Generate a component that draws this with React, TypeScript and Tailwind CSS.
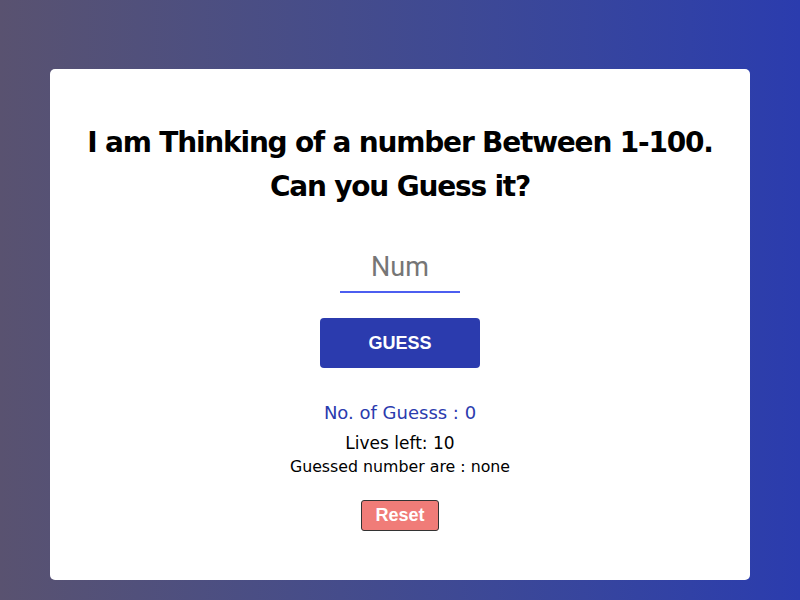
import { useState } from 'react';

export default function App() {
  const [value, setValue] = useState('');

  return (
    <div className="flex h-[600px] w-full items-start justify-center bg-gradient-to-r from-[#595270] to-[#2b3cae] pt-[69px]">
      <div className="flex h-[511px] w-[700px] flex-col items-center rounded-[5px] bg-white pt-[52px]">
        <h1 className="text-center text-[28px] font-bold leading-[44px] tracking-[-1.2px] text-black [font-family:'DejaVu_Sans',sans-serif]">
          I am Thinking of a number Between 1-100.
          <br />
          Can you Guess it?
        </h1>

        <input
          type="text"
          inputMode="numeric"
          value={value}
          onChange={(e) => setValue(e.target.value)}
          placeholder="Num"
          className="mt-[34px] h-[50px] w-[120px] border-b-2 border-[#4c5ef0] bg-transparent text-center text-[27px] text-gray-700 outline-none placeholder:text-[#767676] [font-family:Roboto,sans-serif]"
        />

        <button className="mt-[25px] h-[50px] w-[160px] rounded-[4px] bg-[#2b3bae] text-[18px] font-bold text-white [font-family:'Liberation_Sans',Arial,sans-serif]">
          GUESS
        </button>

        <p className="mt-[33px] text-[18px] leading-[24px] text-[#2b3bae] [font-family:'DejaVu_Sans',sans-serif]">
          No. of Guesss : 0
        </p>
        <p className="mt-[6px] text-[17px] leading-[24px] text-black [font-family:'DejaVu_Sans',sans-serif]">
          Lives left: 10
        </p>
        <p className="mt-[2px] text-[15.8px] leading-[20px] text-black [font-family:'DejaVu_Sans',sans-serif]">
          Guessed number are : none
        </p>

        <button className="mt-[23px] h-[31px] w-[78px] rounded-[3px] border border-[#333] bg-[#f07c78] text-[18px] font-bold text-white [font-family:'Liberation_Sans',Arial,sans-serif]">
          Reset
        </button>
      </div>
    </div>
  );
}
